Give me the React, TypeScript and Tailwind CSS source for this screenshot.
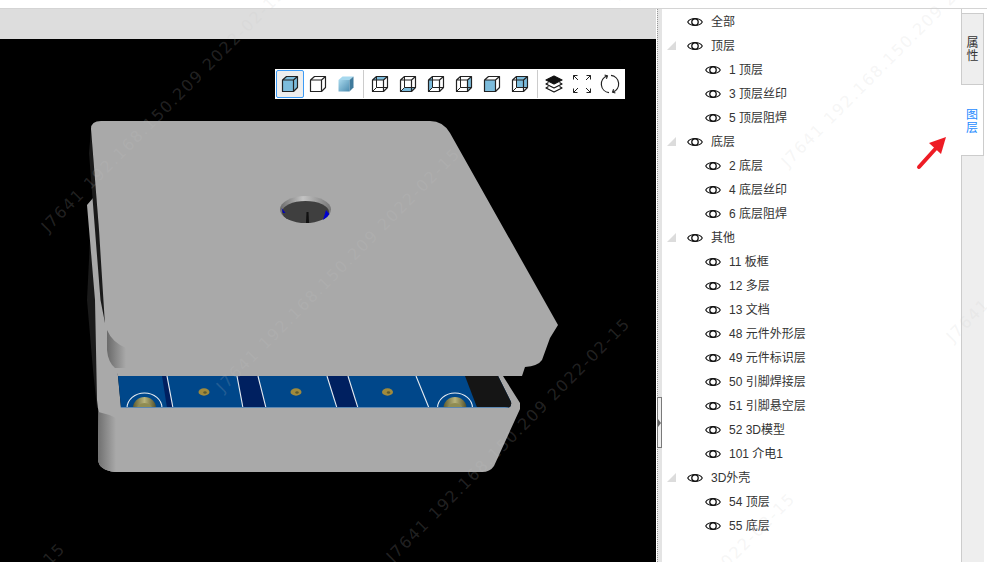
import { Fragment, type ReactNode } from "react";

type LayerRow = { label: string; child?: boolean; arrow?: boolean };

const layers: LayerRow[] = [
  { label: "全部" },
  { label: "顶层", arrow: true },
  { label: "1 顶层", child: true },
  { label: "3 顶层丝印", child: true },
  { label: "5 顶层阻焊", child: true },
  { label: "底层", arrow: true },
  { label: "2 底层", child: true },
  { label: "4 底层丝印", child: true },
  { label: "6 底层阻焊", child: true },
  { label: "其他", arrow: true },
  { label: "11 板框", child: true },
  { label: "12 多层", child: true },
  { label: "13 文档", child: true },
  { label: "48 元件外形层", child: true },
  { label: "49 元件标识层", child: true },
  { label: "50 引脚焊接层", child: true },
  { label: "51 引脚悬空层", child: true },
  { label: "52 3D模型", child: true },
  { label: "101 介电1", child: true },
  { label: "3D外壳", arrow: true },
  { label: "54 顶层", child: true },
  { label: "55 底层", child: true },
];

const watermarks = [
  [50, 235],
  [-170, 790],
  [225, 395],
  [620, 0],
  [395, 565],
  [790, 170],
  [560, 740],
  [955, 345],
];

const Eye = () => (
  <svg width="16" height="12" viewBox="0 0 16 12" fill="none" stroke="#111" strokeWidth="1.1">
    <path d="M0.7 6C3.5 1.4 12.5 1.4 15.3 6C12.5 10.6 3.5 10.6 0.7 6Z" />
    <circle cx="8" cy="6" r="3.2" strokeWidth="1.3" />
  </svg>
);

type Face = "front" | "back" | "top" | "bottom" | "left" | "right";

const faces: Record<Face, string> = {
  front: "M2.5 6H13.5V17.5H2.5Z",
  back: "M6.5 2.5H17.5V13.5H6.5Z",
  top: "M2.5 6L6.5 2.5H17.5L13.5 6Z",
  bottom: "M2.5 17.5L6.5 13.5H17.5L13.5 17.5Z",
  left: "M2.5 6L6.5 2.5V13.5L2.5 17.5Z",
  right: "M13.5 6L17.5 2.5V13.5L13.5 17.5Z",
};

// wire = show the hidden edges too
const Cube = ({ fill = [], wire = false }: { fill?: Face[]; wire?: boolean }) => (
  <svg width="20" height="20" viewBox="0 0 20 20" fill="none" stroke="#222" strokeWidth="1.2" strokeLinejoin="round">
    {fill.map((f) => (
      <path key={f} d={faces[f]} fill="#7cbcdc" stroke="none" />
    ))}
    {wire && <path d="M6.5 2.5V13.5H17.5M6.5 13.5L2.5 17.5" strokeWidth="1" />}
    <path d="M2.5 6H13.5V17.5H2.5ZM2.5 6L6.5 2.5H17.5V13.5L13.5 17.5M13.5 6L17.5 2.5" />
  </svg>
);

const ToolButton = ({ active, children }: { active?: boolean; children: ReactNode }) => (
  <div
    className={
      active
        ? "w-7 h-7 flex items-center justify-center rounded-[2px] border border-[#3d9bf5] bg-[#eeeeee]"
        : "w-7 h-7 flex items-center justify-center"
    }
  >
    {children}
  </div>
);

const Toolbar = () => (
  <div className="absolute left-[275px] top-[30px] w-[350px] h-[30px] bg-white flex items-center pl-px">
    <div className="flex h-7 pr-[3px] border-r border-[#cccccc]">
      <ToolButton active>
        <Cube fill={["front", "top", "right"]} />
      </ToolButton>
      <ToolButton>
        <Cube />
      </ToolButton>
      <ToolButton>
        <svg width="20" height="20" viewBox="0 0 20 20">
          <defs>
            <linearGradient id="solid" x1="0" y1="0" x2="1" y2="1">
              <stop offset="0" stopColor="#a8d8ec" />
              <stop offset="1" stopColor="#4c8cb0" />
            </linearGradient>
          </defs>
          <path d="M2.5 6L6.5 2.5H17.5L13.5 6Z" fill="#a5d8ee" />
          <path d="M2.5 6H13.5V17.5H2.5Z" fill="url(#solid)" />
          <path d="M13.5 6L17.5 2.5V13.5L13.5 17.5Z" fill="#3f7a9c" />
        </svg>
      </ToolButton>
    </div>
    <div className="flex h-7 pl-[2px] pr-[3px] border-r border-[#cccccc]">
      <ToolButton>
        <Cube wire fill={["top"]} />
      </ToolButton>
      <ToolButton>
        <Cube wire fill={["bottom"]} />
      </ToolButton>
      <ToolButton>
        <Cube wire fill={["left"]} />
      </ToolButton>
      <ToolButton>
        <Cube wire fill={["right"]} />
      </ToolButton>
      <ToolButton>
        <Cube fill={["front"]} />
      </ToolButton>
      <ToolButton>
        <Cube wire fill={["back"]} />
      </ToolButton>
    </div>
    <div className="flex h-7 pl-[2px]">
      <ToolButton>
        <svg width="20" height="20" viewBox="0 0 20 20" fill="none" stroke="#111" strokeWidth="1.2" strokeLinejoin="round">
          <path d="M10 2L18 6L10 10L2 6Z" fill="#111" />
          <path d="M4.5 8.5L2 10L10 14L18 10L15.5 8.5" />
          <path d="M4.5 12.5L2 14L10 18L18 14L15.5 12.5" />
        </svg>
      </ToolButton>
      <ToolButton>
        <svg width="20" height="20" viewBox="0 0 20 20" fill="none" stroke="#222" strokeWidth="1">
          <path d="M5.5 1.5H1.5V5.5M1.5 1.5L6 6" />
          <path d="M14.5 1.5H18.5V5.5M18.5 1.5L14 6" />
          <path d="M5.5 18.5H1.5V14.5M1.5 18.5L6 14" />
          <path d="M14.5 18.5H18.5V14.5M18.5 18.5L14 14" />
        </svg>
      </ToolButton>
      <ToolButton>
        <svg width="20" height="20" viewBox="0 0 20 20" fill="none" stroke="#222" strokeWidth="1.2">
          <path d="M9 18.6A8.6 8.6 0 0 1 7.2 1.9" />
          <path d="M4.6 1L7.4 1.9L6.4 4.8" />
          <path d="M11 1.4A8.6 8.6 0 0 1 12.8 18.1" />
          <path d="M15.4 19L12.6 18.1L13.6 15.2" />
        </svg>
      </ToolButton>
    </div>
  </div>
);

// the 3D view, drawn in page coordinates
const BoardScene = () => (
  <svg className="block w-full h-full" viewBox="0 39 656 523">
    <defs>
      <linearGradient id="lidShade" x1="0" y1="0" x2="1" y2="0">
        <stop offset="0" stopColor="#6a6a6a" />
        <stop offset="1" stopColor="#a9a9a9" />
      </linearGradient>
      <linearGradient id="boxShade" x1="0" y1="0" x2="1" y2="0">
        <stop offset="0" stopColor="#707070" />
        <stop offset="1" stopColor="#a9a9a9" />
      </linearGradient>
      <linearGradient id="holeWall" x1="0" y1="0" x2="1" y2="0">
        <stop offset="0" stopColor="#6c6c6c" />
        <stop offset="0.45" stopColor="#c4c4c4" />
        <stop offset="1" stopColor="#777777" />
      </linearGradient>
      <linearGradient id="post" x1="0" y1="0" x2="1" y2="0">
        <stop offset="0" stopColor="#5f5c30" />
        <stop offset="0.5" stopColor="#b8b47c" />
        <stop offset="1" stopColor="#55522a" />
      </linearGradient>
      <clipPath id="floorClip">
        <path d="M118 376H498L511 402Q512 408 505 408H121Z" />
      </clipPath>
    </defs>

    {/* dark outer band of the box wall */}
    <path d="M90 240L87 300L93 370L97 408H101L96 300Z" fill="#1a1a1a" />

    {/* box */}
    <path
      d="M87 205L93 198L112 340L118 376L121 408H506Q512 408 511 402L498 376H503L520 403V409L494 466Q490 472 482 472H115Q99 470 98 460L98.5 412L97 400L95 300Z"
      fill="#a9a9a9"
    />
    <path d="M98.5 412Q108 414 116 418V472H115Q99 470 98 460Z" fill="url(#boxShade)" />

    {/* floor with the pcb */}
    <g clipPath="url(#floorClip)">
      <rect x="110" y="370" width="410" height="45" fill="#00478a" />
      <path d="M465 376H525V410H478Z" fill="#151515" />
      <path d="M162 376H167L173 408H167Z" fill="#002060" />
      <path d="M237 376H258L266 408H243Z" fill="#002060" />
      <path d="M327 376H348L358 408H337Z" fill="#002060" />
      <g stroke="#e8edf2" strokeWidth="1.1">
        <path d="M167 376L173 408" />
        <path d="M237 376L243 408" />
        <path d="M258 376L266 408" />
        <path d="M327 376L337 408" />
        <path d="M348 376L358 408" />
        <path d="M416 376L429 408" />
      </g>
      {[204, 296, 387.5].map((x) => (
        <Fragment key={x}>
          <ellipse cx={x} cy="392" rx="5.5" ry="3.7" fill="#a08a3c" />
          <ellipse cx={x + 1} cy="392.5" rx="1.7" ry="1.2" fill="#5a5a30" />
        </Fragment>
      ))}
      {[144.5, 455].map((x) => (
        <Fragment key={x}>
          <ellipse cx={x} cy="408" rx="17.5" ry="15" fill="none" stroke="#e8edf2" strokeWidth="1.1" />
          <ellipse cx={x} cy="408" rx="11.5" ry="11" fill="url(#post)" />
          <ellipse cx={x} cy="410" rx="8" ry="7" fill="#8f8c52" />
        </Fragment>
      ))}
      <rect x="110" y="407" width="410" height="1" fill="#5d88b3" />
    </g>

    {/* shadow strip between wall and lid */}
    <path d="M91 130L89 153L95 230L100.5 300L105 323H108L99 230Z" fill="#1a1a1a" />

    {/* lid */}
    <path
      d="M91 129Q91 121 101 121H430Q443 121 450 133L558 325L550 338L542 360Q538 366 525 367L522 376H118L115 367Q108 362 107 350L105 325L99 230Z"
      fill="#a9a9a9"
    />
    <path d="M107 330Q112 342 126 348V368H115Q108 362 107 350Z" fill="url(#lidShade)" />

    {/* hole in the lid */}
    <ellipse cx="305.5" cy="209.5" rx="25.5" ry="13.5" fill="url(#holeWall)" />
    <ellipse cx="305.5" cy="212" rx="23.5" ry="11" fill="#3f3f3f" />
    <path d="M281.5 208L285.5 213L283 213Z" fill="#0000c0" />
    <path d="M323 220Q328 217 329.5 214L326 210Z" fill="#0000d0" />
    <path d="M306.5 212H308.5L309 223H306Z" fill="#111111" />
  </svg>
);

const App = () => {
  return (
    <div
      className="relative w-[987px] h-[562px] overflow-hidden bg-white flex flex-col text-xs text-[#333333]"
      style={{ fontFamily: '"Liberation Sans", "Noto Sans CJK SC", sans-serif' }}
    >
      <div className="h-2 shrink-0 bg-white" />
      <div className="flex-1 min-h-0 flex border-t border-[#d4d4d4]">
        {/* viewer */}
        <div className="w-[656px] shrink-0 flex flex-col">
          <div className="h-[30px] shrink-0 bg-[#dddddd]" />
          <div className="relative flex-1 min-h-0 bg-black">
            <BoardScene />
            <Toolbar />
          </div>
        </div>

        {/* splitter */}
        <div className="relative w-[6px] shrink-0 pl-px bg-white">
          <div className="h-full bg-[#e4e4e4] border-l border-dotted border-[#999999]" />
          <div className="absolute left-px top-[388px] w-[5px] h-[51px] border border-[#7a7a7a] bg-[#eeeeee] flex items-center">
            <div className="w-0 h-0 border-y-[4px] border-y-transparent border-l-[3px] border-l-[#666666]" />
          </div>
        </div>

        {/* layer tree */}
        <div className="flex-1 min-w-0 bg-white pt-px">
          {layers.map((row) => (
            <div key={row.label} className="relative h-6 flex items-center">
              {row.arrow && (
                <svg className="absolute left-[5px] top-[7px]" width="9" height="9" viewBox="0 0 9 9">
                  <path d="M9 0V9H0Z" fill="#dcdcdc" />
                </svg>
              )}
              <div className={row.child ? "pl-[43px] flex items-center gap-2" : "pl-[25px] flex items-center gap-2"}>
                <Eye />
                <span>{row.label}</span>
              </div>
            </div>
          ))}
        </div>

        {/* side tabs */}
        <div className="w-[26px] shrink-0 flex flex-col bg-white">
          <div className="h-1 border-l border-[#cccccc]" />
          <div className="h-[72px] w-[23px] flex items-center justify-center pt-[2px] bg-[#eeeeee] border border-[#cccccc] leading-[13px] text-center">
            属<br />性
          </div>
          <div className="h-[71px] w-[23px] flex items-center justify-center pt-[3px] bg-white border-r border-b border-[#cccccc] leading-[13px] text-center text-[#1e8cff]">
            图<br />层
          </div>
          <div className="flex-1 w-[23px] bg-[#eeeeee] border-l border-[#cccccc]" />
        </div>
      </div>

      {/* red pointer arrow on top of the screenshot */}
      <svg className="absolute left-[914px] top-[134px]" width="36" height="38" viewBox="0 0 36 38" fill="none">
        <path d="M5 33L24 12" stroke="#ee1c25" strokeWidth="4" strokeLinecap="round" />
        <path d="M32 3L15 9L27 20Z" fill="#ee1c25" />
      </svg>

      {/* watermark */}
      {watermarks.map(([x, y]) => (
        <div
          key={`${x}-${y}`}
          className="absolute origin-bottom-left -rotate-45 whitespace-nowrap pointer-events-none text-[16px] leading-none tracking-[1.6px] text-[#c8c8c8]/[0.18]"
          style={{ left: x, top: y - 16, fontFamily: '"DejaVu Sans", sans-serif' }}
        >
          J7641 192.168.150.209 2022-02-15
        </div>
      ))}
    </div>
  );
};

export default App;
